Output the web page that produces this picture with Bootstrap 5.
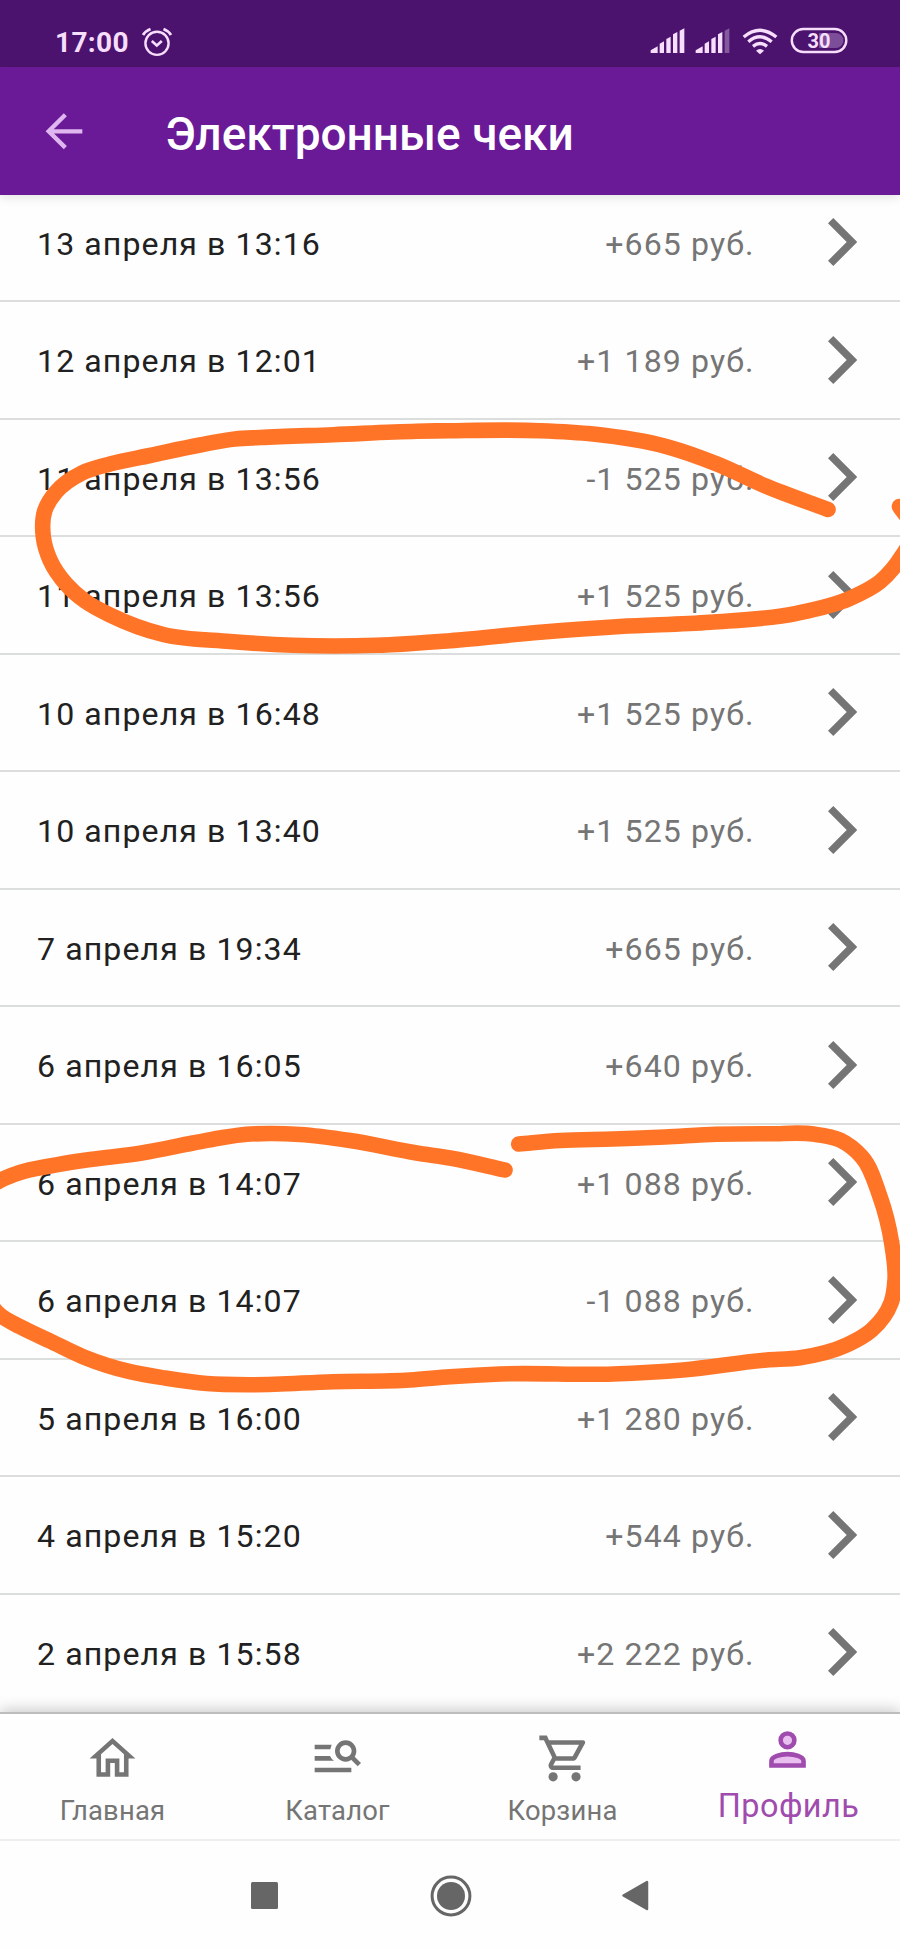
<!DOCTYPE html>
<html lang="ru">
<head>
<meta charset="utf-8">
<meta name="viewport" content="width=device-width, initial-scale=1">
<title>Электронные чеки</title>
<link href="https://cdn.jsdelivr.net/npm/bootstrap@5.3.0/dist/css/bootstrap.min.css" rel="stylesheet">
<style>
  body { font-family: Roboto, "Liberation Sans", sans-serif; background: #fefefe; height: 1950px; overflow: hidden; }
  svg { display: block; flex: none; }
  .status-bar { height: 66.5px; background: #4b136e; color: #f6defc; padding: 19px 53px 0 55px; }
  .clock { font-size: 28px; font-weight: 700; letter-spacing: .35px; line-height: 47px; }
  .status-icon { margin-top: 7.5px; }
  .battery-text { font: 700 20px Roboto, sans-serif; }
  .app-bar { height: 128.5px; background: #6a1a97; padding: 6px 45px 0; box-shadow: 0 2px 10px rgba(0,0,0,.12); z-index: 2; }
  .app-bar svg { margin-top: -5px; }
  .app-title { font-size: 46px; font-weight: 500; margin-left: 82.5px; line-height: 1; }
  .receipts { height: 1517px; }
  .receipt { height: 117.5px; padding: 0 42.6px 0 37px; border-bottom: 2px solid #dcdddd; font-size: 32.1px; letter-spacing: 1.1px; color: #212121; flex: none; }
  .receipt:last-child { border-color: transparent; }
  .receipt span { padding-top: 3px; }
  .receipt .sum { color: #757575; margin-right: 73.5px; }
  .tab-bar { height: 129px; background: #fefefe; border-top: 2px solid #bdbdbd; border-bottom: 2px solid #efefef; box-shadow: 0 -2px 14px rgba(0,0,0,.22); clip-path: inset(-24px 0 0 0); z-index: 2; }
  .tab { color: #757575; font-size: 27.4px; letter-spacing: .2px; line-height: 32px; padding-top: 17px; gap: 9px; }
  .tab svg { width: 55px; height: 55px; }
  .tab.current { color: #a04caf; font-size: 32.4px; letter-spacing: .45px; padding-top: 8px; gap: 13px; }
  .tab.current span { padding-left: 2px; }
  .sys-nav { height: 109px; color: #666; }
  .ink { fill: none; stroke: #ff7427; stroke-width: 15.6; stroke-linecap: round; stroke-linejoin: round; z-index: 5; pointer-events: none; }
</style>
</head>
<body class="position-relative d-flex flex-column">
<header class="status-bar d-flex align-items-start">
  <span class="clock">17:00</span>
  <svg class="status-icon" width="32" height="32" viewBox="0 0 32 32" style="margin-left:12.5px" fill="none" stroke="currentColor" stroke-width="2.4"><circle cx="16" cy="16.3" r="11.6"/><path d="M10.800 14l5 4.500 5-4.500" stroke-width="2.6"/><path d="M2 8q2.500-4 7.500-6M30 8q-2.500-4-7.500-6" stroke-width="2.8"/></svg>
  <svg class="status-icon ms-auto" width="35" height="28" viewBox="148 80 105 84" fill="currentColor"><path d="M150 158v-8l21-12v20zM177 158v-28l13-7v35zM197 158v-42l13-7v49zM217 158v-56l13-7v63zM237 158V91l14-7v74z"/></svg>
  <svg class="status-icon" width="35" height="28" viewBox="148 80 105 84" style="margin-left:10px" fill="currentColor"><path d="M150 158v-8l21-12v20zM177 158v-28l13-7v35zM197 158v-42l13-7v49zM217 158v-56l13-7v63z"/><path opacity=".35" d="M237 158V91l14-7v74z"/></svg>
  <svg class="status-icon" width="36" height="28" viewBox="424 80 108 84" style="margin-left:12px" fill="none" stroke="currentColor" stroke-width="10"><path d="M429 110q49-40 98 0M443 124q35-29 70 0M457 138q21-17 42 0"/><path fill="currentColor" stroke="none" d="M466 151q12-10 24 0l-12 11z"/></svg>
  <svg class="status-icon" width="58" height="28" viewBox="0 0 58 28" style="margin-left:12px;margin-right:-1px"><path d="M29 6h17a7.500 7.500 0 0 1 0 15H29z" fill="#7c4d99"/><rect x="1.800" y="2" width="54.500" height="23" rx="11.500" fill="none" stroke="currentColor" stroke-width="2.4"/><text class="battery-text" x="29" y="20.800" text-anchor="middle" fill="currentColor">30</text></svg>
</header>

<nav class="app-bar d-flex align-items-center position-relative text-white">
  <svg width="38" height="37" viewBox="137 338 112 111" fill="none" stroke="#dfb6ef" stroke-width="13"><path d="M248 393H148M197 343l-50 50 50 49"/></svg>
  <h1 class="app-title mb-0">Электронные чеки</h1>
</nav>

<main class="receipts d-flex flex-column justify-content-end overflow-hidden" id="receipts"></main>

<nav class="tab-bar row g-0 position-relative text-center">
  <div class="tab col-3 d-flex flex-column align-items-center">
    <svg viewBox="0 0 24 24" fill="currentColor"><path d="M12 5.690l5 4.500V18h-2v-6H9v6H7v-7.810l5-4.500M12 3L2 12h3v8h6v-6h2v6h6v-8h3L12 3z"/></svg>
    <span>Главная</span>
  </div>
  <div class="tab col-3 d-flex flex-column align-items-center">
    <svg viewBox="930 395 165 165" fill="currentColor"><path d="M944 436h51l-4 14h-47zM944 470h46q4 9 12 14h-58zM944 505h110v14H944z"/><circle cx="1037" cy="455" r="25" fill="none" stroke="currentColor" stroke-width="14"/><path d="M1053 471l25 25" stroke="currentColor" stroke-width="14"/></svg>
    <span>Каталог</span>
  </div>
  <div class="tab col-3 d-flex flex-column align-items-center">
    <svg viewBox="-0.9 0 24 24" fill="currentColor"><path d="M15.550 13c.75 0 1.410-.41 1.750-1.030l3.580-6.490A.996.996 0 0 0 20.010 4H5.210l-.94-2H1v2h2l3.600 7.590-1.350 2.440C4.520 15.370 5.480 17 7 17h12v-2H7l1.100-2h7.450zM6.160 6h12.150l-2.760 5H8.530L6.160 6z"/><circle cx="7" cy="20" r="2"/><circle cx="17" cy="20" r="2"/></svg>
    <span>Корзина</span>
  </div>
  <div class="tab current col-3 d-flex flex-column align-items-center">
    <svg viewBox="0 0 24 24" fill="#e9bff0" stroke="currentColor" stroke-width="2"><circle cx="12" cy="8" r="3"/><path d="M5 19v-2c0-1.900 4-3 7-3s7 1.100 7 3v2z"/></svg>
    <span>Профиль</span>
  </div>
</nav>

<footer class="sys-nav d-flex align-items-center justify-content-center">
  <svg width="27" height="27" viewBox="0 0 27 27"><rect width="27" height="27" rx="1.500" fill="currentColor"/></svg>
  <svg width="42" height="42" viewBox="0 0 42 42" style="margin:0 150px 0 152px"><circle cx="21" cy="21" r="18.900" fill="none" stroke="currentColor" stroke-width="3"/><circle cx="21" cy="21" r="14" fill="currentColor"/></svg>
  <svg width="27" height="31" viewBox="0 0 27 31"><path d="M1.500 15.500L25 2v27z" fill="currentColor" stroke="currentColor" stroke-width="2.500" stroke-linejoin="round"/></svg>
</footer>

<svg class="ink position-absolute top-0 start-0" id="ink" width="900" height="1950" viewBox="0 0 900 1950"></svg>

<script src="https://cdn.jsdelivr.net/npm/bootstrap@5.3.0/dist/js/bootstrap.bundle.min.js"></script>
<script>
  const receipts = [
    ['13 апреля в 13:16', '+665 руб.'], ['12 апреля в 12:01', '+1 189 руб.'],
    ['11 апреля в 13:56', '-1 525 руб.'], ['11 апреля в 13:56', '+1 525 руб.'],
    ['10 апреля в 16:48', '+1 525 руб.'], ['10 апреля в 13:40', '+1 525 руб.'],
    ['7 апреля в 19:34', '+665 руб.'], ['6 апреля в 16:05', '+640 руб.'],
    ['6 апреля в 14:07', '+1 088 руб.'], ['6 апреля в 14:07', '-1 088 руб.'],
    ['5 апреля в 16:00', '+1 280 руб.'], ['4 апреля в 15:20', '+544 руб.'],
    ['2 апреля в 15:58', '+2 222 руб.']
  ];
  document.getElementById('receipts').innerHTML = receipts.map(([date, sum]) =>
    `<div class="receipt d-flex align-items-center"><span>${date}</span><span class="sum ms-auto">${sum}</span>` +
    `<svg width="29.3" height="48" viewBox="0 0 29.3 48" fill="#757575"><path d="M5.300 0L29.300 24 5.300 48 0 42.700 18.700 24 0 5.300z"/></svg></div>`).join('');

  // Freehand marker strokes, smoothed through their points
  const strokes = [
    [[828,509.5],[765,485.7],[717,464],[667,446.7],[593,434],[540,430.7],[450,430.7],[416.7,431.3],[333,434.7],[260,437.5],[235,439],[200,445],[150,455.5],[110,464],[82,473],[56,492],[45,510],[43.3,536.7],[50,560],[66,584],[85,601],[110,615],[163.3,634.5],[230,641.5],[293,645.3],[376.7,645.3],[450,640.7],[540,632.3],[620,626.5],[710,622.3],[796.7,613.3],[850,598.3],[880,581.7],[902,556],[914,530],[899.5,506.5]],
    [[518.7,1144],[560,1140.5],[613,1139],[665,1137],[716.7,1134.3],[770,1133.8],[813,1134],[840,1140],[861.7,1156.7],[880,1196.7],[891.7,1243.3],[895,1280],[891,1303],[871.7,1330],[846.7,1345],[800,1357.7],[766.7,1360],[683,1370],[613,1374],[500,1374],[450,1376.7],[410,1380],[333,1381.7],[253,1384.7],[206.7,1383.5],[165,1378],[130,1371.7],[83,1356.7],[50,1341],[20,1326.7],[0,1315],[-20,1290]],
    [[-18,1192],[0,1180.5],[20,1172.5],[50,1166],[83,1160.5],[143,1152.7],[193,1143],[220,1138],[246.7,1134.3],[270,1133.5],[300,1134.5],[350,1140.5],[416.7,1153],[450,1158],[505,1170]]
  ];
  const gap = (a, b) => Math.hypot(b[0] - a[0], b[1] - a[1]);
  const slope = (o, a, b) => {
    const h1 = gap(o, a), h2 = gap(a, b);
    if (!h1 || !h2) return [(b[0] - o[0]) / (h1 + h2), (b[1] - o[1]) / (h1 + h2)];
    return [0, 1].map(k => ((a[k] - o[k]) / h1 * h2 + (b[k] - a[k]) / h2 * h1) / (h1 + h2));
  };
  const curve = p => p.slice(1).reduce((d, b, i) => {
    const a = p[i], h = gap(a, b) / 3;
    const s = slope(p[i - 1] || a, a, b), t = slope(a, b, p[i + 2] || b);
    return d + `C${a[0] + s[0] * h} ${a[1] + s[1] * h} ${b[0] - t[0] * h} ${b[1] - t[1] * h} ${b[0]} ${b[1]}`;
  }, `M${p[0][0]} ${p[0][1]}`);
  document.getElementById('ink').innerHTML = strokes.map(s => `<path d="${curve(s)}"/>`).join('');
</script>
</body>
</html>
